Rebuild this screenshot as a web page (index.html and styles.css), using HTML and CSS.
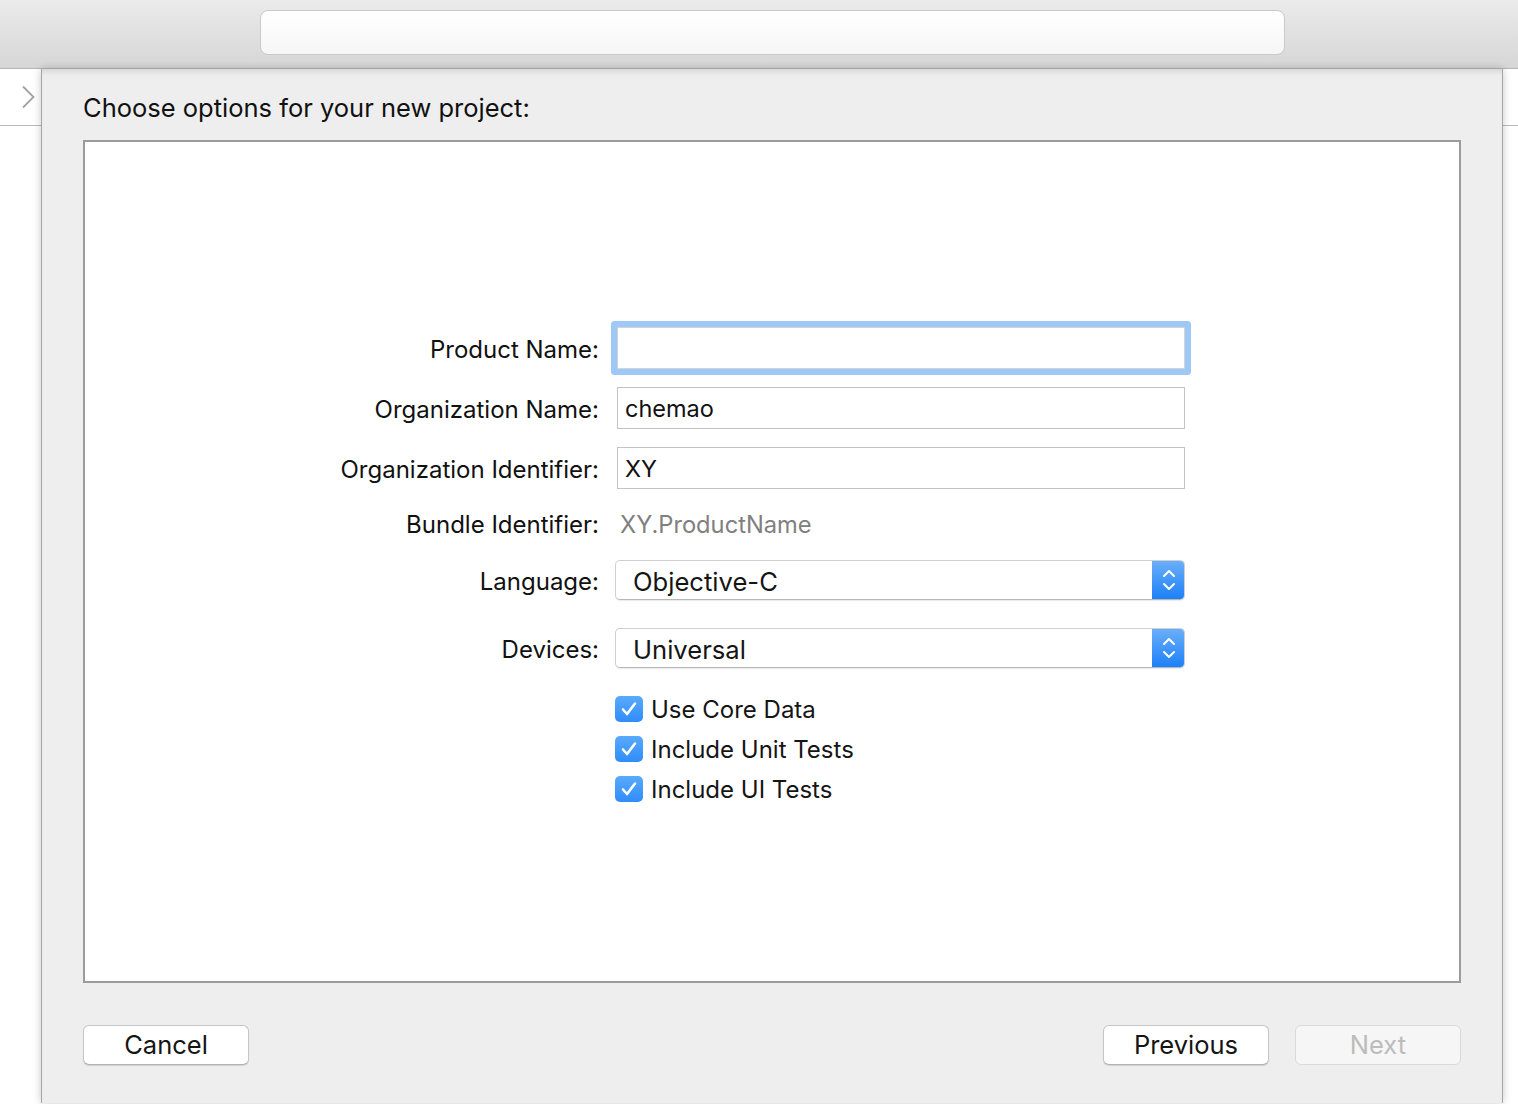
FILE: index.html
```html
<!DOCTYPE html>
<html lang="en">
<head>
  <meta charset="UTF-8">
  <title>Choose options for your new project</title>
  <link rel="stylesheet" href="styles.css">
</head>
<body>

  <div class="toolbar">
    <div class="search"></div>
  </div>

  <div class="workspace">
    <div class="side side-left">
      <div class="side-head">
        <svg class="chevron" width="16" height="24" viewBox="0 0 16 24">
          <path d="M3 1.5 L13.5 12 L3 22.5" fill="none" stroke="#a3a3a3" stroke-width="1.8"/>
        </svg>
      </div>
    </div>

    <div class="sheet">
      <h1>Choose options for your new project:</h1>

      <div class="panel">
        <div class="row">
          <label>Product Name:</label>
          <div class="field focused"></div>
        </div>
        <div class="row">
          <label>Organization Name:</label>
          <div class="field">chemao</div>
        </div>
        <div class="row">
          <label>Organization Identifier:</label>
          <div class="field">XY</div>
        </div>
        <div class="row row-text">
          <label>Bundle Identifier:</label>
          <div class="value">XY.ProductName</div>
        </div>
        <div class="row row-popup">
          <label>Language:</label>
          <div class="popup">
            <span>Objective-C</span>
            <span class="stepper">
              <svg width="14" height="26" viewBox="0 0 14 26">
                <path d="M2 9 L7 4 L12 9 M2 17 L7 22 L12 17" fill="none" stroke="#fff" stroke-width="2" stroke-linecap="round" stroke-linejoin="round"/>
              </svg>
            </span>
          </div>
        </div>
        <div class="row row-popup second">
          <label>Devices:</label>
          <div class="popup">
            <span>Universal</span>
            <span class="stepper">
              <svg width="14" height="26" viewBox="0 0 14 26">
                <path d="M2 9 L7 4 L12 9 M2 17 L7 22 L12 17" fill="none" stroke="#fff" stroke-width="2" stroke-linecap="round" stroke-linejoin="round"/>
              </svg>
            </span>
          </div>
        </div>

        <div class="checks">
          <div class="check">
            <span class="box"><svg width="18" height="16" viewBox="0 0 18 16"><path d="M3 8.5 L7 13 L15 2.5" fill="none" stroke="#fff" stroke-width="2.6" stroke-linecap="round" stroke-linejoin="round"/></svg></span>
            Use Core Data
          </div>
          <div class="check">
            <span class="box"><svg width="18" height="16" viewBox="0 0 18 16"><path d="M3 8.5 L7 13 L15 2.5" fill="none" stroke="#fff" stroke-width="2.6" stroke-linecap="round" stroke-linejoin="round"/></svg></span>
            Include Unit Tests
          </div>
          <div class="check">
            <span class="box"><svg width="18" height="16" viewBox="0 0 18 16"><path d="M3 8.5 L7 13 L15 2.5" fill="none" stroke="#fff" stroke-width="2.6" stroke-linecap="round" stroke-linejoin="round"/></svg></span>
            Include UI Tests
          </div>
        </div>
      </div>

      <div class="button-row">
        <button class="btn">Cancel</button>
        <div class="spacer"></div>
        <button class="btn">Previous</button>
        <button class="btn disabled">Next</button>
      </div>
    </div>

    <div class="side side-right">
      <div class="side-head"></div>
    </div>
  </div>

</body>
</html>
```

FILE: styles.css
```css
html, body {
  margin: 0;
  height: 100%;
  overflow: hidden;
}
body {
  font-family: Inter, 'Noto Sans', Arial, sans-serif;
  color: #1d1d1d;
  background: #fff;
}
.toolbar {
  height: 69px;
  background: linear-gradient(180deg, #ebebeb 0%, #d6d6d6 100%);
  border-bottom: 1px solid #b5b5b5;
  display: flex;
  justify-content: center;
  padding-top: 10px;
  box-sizing: border-box;
}
.search {
  width: 1025px;
  height: 45px;
  margin-left: 26px;
  border: 1px solid #c9c9c9;
  border-radius: 8px;
  background: linear-gradient(180deg, #ffffff 0%, #f6f6f6 100%);
  box-sizing: border-box;
}
.workspace {
  display: flex;
  height: 1034px;
}
.side {
  background: #fff;
  flex-shrink: 0;
}
.side-left {
  width: 41px;
}
.side-right {
  flex: 1;
  flex-shrink: 1;
  min-width: 0;
}
.side-head {
  height: 56px;
  border-bottom: 1px solid #b9b9b9;
  display: flex;
  align-items: center;
}
.side-left .side-head {
  padding-left: 20px;
}
.sheet {
  width: 1462px;
  flex-shrink: 0;
  background: #eeeeee;
  border-left: 1px solid #a6a6a6;
  border-right: 1px solid #a6a6a6;
  box-shadow: 0 0 8px rgba(0, 0, 0, 0.22), inset 0 6px 6px -4px rgba(0, 0, 0, 0.12);
  padding: 0 41px 0 41px;
  box-sizing: border-box;
  position: relative;
  z-index: 1;
}
h1 {
  font-size: 25.5px;
  font-weight: 400;
  line-height: 30px;
  margin: 24px 0 17px 0;
  color: #111;
  letter-spacing: 0;
}
.panel {
  height: 843px;
  background: #fff;
  border: 2px solid #9b9b9b;
  box-sizing: border-box;
  padding-top: 185px;
}
.row {
  display: flex;
  align-items: center;
  height: 42px;
  margin-bottom: 18px;
}
.row label {
  width: 514px;
  margin-right: 18px;
  text-align: right;
  font-size: 24px;
  color: #111;
  padding-top: 3px;
}
.field {
  width: 568px;
  height: 42px;
  box-sizing: border-box;
  border: 1px solid #c3c3c3;
  background: #fff;
  font-size: 23.5px;
  line-height: 42px;
  padding-left: 7px;
  color: #111;
}
.field.focused {
  border-color: #d4d4d4;
  box-shadow: 0 0 0 6px #9ec8f6;
  border-radius: 1px;
}
.row-text {
  height: 34px;
  margin-bottom: 19px;
}
.row-text label {
  padding-top: 0;
}
.value {
  font-size: 23.7px;
  color: #808080;
  padding-left: 3px;
}
.row-popup {
  height: 40px;
  margin-bottom: 28px;
}
.row-popup label {
  margin-right: 16px;
}
.row-popup.second {
  margin-bottom: 22px;
}
.popup {
  width: 570px;
  height: 40px;
  box-sizing: border-box;
  border: 1px solid #d0d0d0;
  border-bottom-color: #b7b7b7;
  border-radius: 5px;
  background: #fff;
  box-shadow: 0 1px 1px rgba(0, 0, 0, 0.08);
  display: flex;
  align-items: center;
  justify-content: space-between;
  padding-left: 17px;
  font-size: 25.6px;
  color: #151515;
  overflow: hidden;
}
.popup > span:first-child {
  padding-top: 2px;
}
.stepper {
  width: 33px;
  height: 40px;
  margin-right: -1px;
  background: linear-gradient(180deg, #6cb0fa 0%, #1b7ff7 100%);
  display: flex;
  align-items: center;
  justify-content: center;
}
.checks {
  padding-left: 530px;
  margin-top: -1px;
}
.check {
  display: flex;
  align-items: center;
  height: 40px;
  font-size: 24px;
  color: #151515;
}
.box {
  width: 28px;
  height: 26px;
  border-radius: 5px;
  background: linear-gradient(180deg, #5aaafc 0%, #2f8cf9 100%);
  display: flex;
  align-items: center;
  justify-content: center;
  margin-right: 8px;
}
.button-row {
  display: flex;
  gap: 26px;
  margin-top: 42px;
}
.spacer {
  flex: 1;
}
.btn {
  width: 166px;
  height: 40px;
  border: 1px solid #c6c6c6;
  border-bottom-color: #b2b2b2;
  border-radius: 6px;
  background: #fff;
  box-shadow: 0 1px 1px rgba(0, 0, 0, 0.12);
  font-family: Inter, 'Noto Sans', Arial, sans-serif;
  font-size: 25.5px;
  color: #151515;
  padding: 0 0 1px 0;
}
.btn.disabled {
  background: #f6f6f6;
  color: #bcbcbc;
  border-color: #dadada;
  box-shadow: none;
}
```
